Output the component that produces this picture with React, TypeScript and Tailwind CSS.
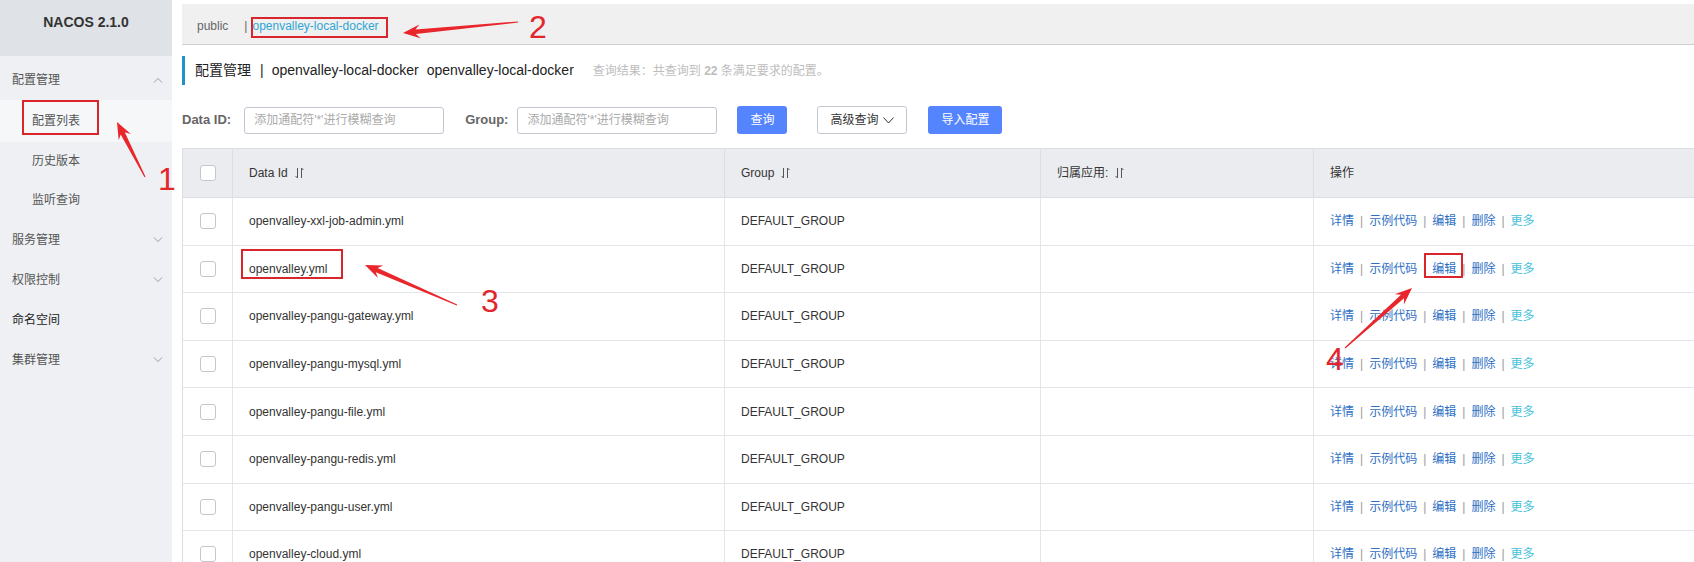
import React from "react";

const rows = [
  "openvalley-xxl-job-admin.yml",
  "openvalley.yml",
  "openvalley-pangu-gateway.yml",
  "openvalley-pangu-mysql.yml",
  "openvalley-pangu-file.yml",
  "openvalley-pangu-redis.yml",
  "openvalley-pangu-user.yml",
  "openvalley-cloud.yml",
];

const Chevron = ({ up }: { up?: boolean }) => (
  <svg width="10" height="6" viewBox="0 0 10 6" className="text-[#9a9da3]">
    <polyline
      points={up ? "1,5.5 5,1.5 9,5.5" : "1,0.5 5,4.5 9,0.5"}
      fill="none"
      stroke="currentColor"
      strokeWidth="1"
    />
  </svg>
);

const SortIcon = () => (
  <svg width="9" height="12" viewBox="0 0 9 12" className="ml-[7px] text-[#555]">
    <path d="M2.5 1 V11 L0.5 9" fill="none" stroke="currentColor" strokeWidth="1" />
    <path d="M6.5 11 V1 L8.5 3" fill="none" stroke="currentColor" strokeWidth="1" />
  </svg>
);

const Checkbox = () => (
  <span className="block w-[16px] h-[16px] rounded-[3px] border border-[#c4c6cf] bg-white" />
);

// red screenshot-tool arrow, tail -> tip
function arrow(tx: number, ty: number, px: number, py: number) {
  const dx = px - tx;
  const dy = py - ty;
  const len = Math.sqrt(dx * dx + dy * dy);
  const ux = dx / len;
  const uy = dy / len;
  const nx = -uy;
  const ny = ux;
  const head = 17;
  const pt = (d: number, w: number) =>
    `${(px - ux * d + nx * w).toFixed(1)},${(py - uy * d + ny * w).toFixed(1)}`;
  return [
    `${(tx + nx * 0.6).toFixed(1)},${(ty + ny * 0.6).toFixed(1)}`,
    pt(head * 0.75, 2.3),
    pt(head, 6.8),
    `${px},${py}`,
    pt(head, -6.8),
    pt(head * 0.75, -2.3),
    `${(tx - nx * 0.6).toFixed(1)},${(ty - ny * 0.6).toFixed(1)}`,
  ].join(" ");
}

const Sep = () => <span className="mx-[6px] text-[#9a9a9a]">|</span>;

const Actions = () => (
  <div className="flex items-center text-[12px] text-[#2e6fc4]">
    <span>详情</span>
    <Sep />
    <span>示例代码</span>
    <Sep />
    <span>编辑</span>
    <Sep />
    <span>删除</span>
    <Sep />
    <span className="text-[#45c1dc]">更多</span>
  </div>
);

const cols = "grid grid-cols-[50px_492px_316px_273px_1fr]";

export default function App() {
  return (
    <div className="relative w-[1694px] h-[562px] overflow-hidden flex bg-white text-[#333] font-['Liberation_Sans','Noto_Sans_CJK_SC',sans-serif]">
      {/* sidebar */}
      <aside className="w-[172px] shrink-0 bg-[#eef0f3]">
        <div className="h-[56px] bg-[#dfe2e6] flex justify-center pt-[13px] text-[14px] font-bold leading-[18px] text-[#333]">
          NACOS 2.1.0
        </div>
        <nav className="pt-[4px] text-[12px] text-[#555]">
          <div className="h-[40px] flex items-center justify-between pl-[12px] pr-[9px]">
            <span>配置管理</span>
            <Chevron up />
          </div>
          <div className="h-[42px] flex items-center pl-[32px] bg-[#f6f7f9]">配置列表</div>
          <div className="h-[38px] flex items-center pl-[32px]">历史版本</div>
          <div className="h-[40px] flex items-center pl-[32px]">监听查询</div>
          <div className="h-[40px] flex items-center justify-between pl-[12px] pr-[9px]">
            <span>服务管理</span>
            <Chevron />
          </div>
          <div className="h-[40px] flex items-center justify-between pl-[12px] pr-[9px]">
            <span>权限控制</span>
            <Chevron />
          </div>
          <div className="h-[40px] flex items-center pl-[12px] text-[#222]">命名空间</div>
          <div className="h-[40px] flex items-center justify-between pl-[12px] pr-[9px]">
            <span>集群管理</span>
            <Chevron />
          </div>
        </nav>
      </aside>

      {/* main */}
      <main className="flex-1 pl-[10px] pt-[4px] min-w-0">
        <div className="h-[41px] bg-[#f0f0f0] border-b border-[#cfcfcf] flex items-center pl-[15px] pt-[4px] text-[12px]">
          <span className="text-[#666]">public</span>
          <span className="ml-[16px] text-[#666]">|</span>
          <span className="ml-[5px] text-[#2ea7d6]">openvalley-local-docker</span>
        </div>

        <div className="mt-[11px] h-[29px] border-l-[3px] border-[#1f93c8] pl-[10px] flex items-center text-[14px] text-[#222]">
          <span>配置管理</span>
          <span className="ml-[9px]">|</span>
          <span className="ml-[8px]">openvalley-local-docker</span>
          <span className="ml-[8px]">openvalley-local-docker</span>
          <span className="ml-[19px] text-[12px] text-[#bdbdbd]">
            查询结果：共查询到 <b className="font-bold">22</b> 条满足要求的配置。
          </span>
        </div>

        <div className="mt-[21px] h-[28px] flex items-center text-[12px]">
          <span className="text-[13px] font-bold text-[#666]">Data ID:</span>
          <div className="ml-[13px] w-[200px] h-[27px] border border-[#c4c6cf] rounded-[3px] flex items-center pl-[9px] text-[#aaa]">
            添加通配符'*'进行模糊查询
          </div>
          <span className="ml-[21px] text-[13px] font-bold text-[#666]">Group:</span>
          <div className="ml-[9px] w-[200px] h-[27px] border border-[#c4c6cf] rounded-[3px] flex items-center pl-[9px] text-[#aaa]">
            添加通配符'*'进行模糊查询
          </div>
          <button className="ml-[20px] w-[50px] h-[28px] rounded-[3px] bg-[#5584ff] text-white">查询</button>
          <button className="ml-[30px] w-[90px] h-[28px] rounded-[3px] border border-[#c4c6cf] bg-white text-[#333] flex items-center justify-center gap-[5px]">
            高级查询
            <svg width="11" height="7" viewBox="0 0 11 7">
              <polyline points="0.5,0.5 5.5,6 10.5,0.5" fill="none" stroke="#333" strokeWidth="1" />
            </svg>
          </button>
          <button className="ml-[21px] w-[74px] h-[28px] rounded-[3px] bg-[#5584ff] text-white">导入配置</button>
        </div>

        <div className="mt-[14px] border-t border-l border-[#dcdee3] text-[12px]">
          <div className={`${cols} h-[49px] bg-[#ebecf0] border-b border-[#dcdee3]`}>
            <div className="flex items-center justify-center border-r border-[#dcdee3]">
              <Checkbox />
            </div>
            <div className="flex items-center pl-[16px] border-r border-[#dcdee3]">
              Data Id
              <SortIcon />
            </div>
            <div className="flex items-center pl-[16px] border-r border-[#dcdee3]">
              Group
              <SortIcon />
            </div>
            <div className="flex items-center pl-[16px] border-r border-[#dcdee3]">
              归属应用:
              <SortIcon />
            </div>
            <div className="flex items-center pl-[16px]">操作</div>
          </div>
          {rows.map((r) => (
            <div key={r} className={`${cols} h-[47.6px] border-b border-[#e4e5e9]`}>
              <div className="flex items-center justify-center border-r border-[#e4e5e9]">
                <Checkbox />
              </div>
              <div className="flex items-center pl-[16px] border-r border-[#e4e5e9]">{r}</div>
              <div className="flex items-center pl-[16px] border-r border-[#e4e5e9]">DEFAULT_GROUP</div>
              <div className="border-r border-[#e4e5e9]" />
              <div className="flex items-center pl-[16px]">
                <Actions />
              </div>
            </div>
          ))}
        </div>
      </main>

      {/* annotations */}
      <div className="absolute left-[22px] top-[100px] w-[77px] h-[35px] border-2 border-[#d9262c]" />
      <div className="absolute left-[251px] top-[17px] w-[137px] h-[21px] border-2 border-[#d9262c]" />
      <div className="absolute left-[241px] top-[249px] w-[102px] h-[30px] border-2 border-[#d9262c]" />
      <div className="absolute left-[1424px] top-[253px] w-[39px] h-[25px] border-2 border-[#d9262c]" />

      <svg className="absolute left-0 top-0 pointer-events-none" width="1694" height="562">
        <polygon points={arrow(145, 177, 117, 122)} fill="#e8262b" />
        <polygon points={arrow(518, 22, 403, 33)} fill="#e8262b" />
        <polygon points={arrow(457, 305, 365, 265)} fill="#e8262b" />
        <polygon points={arrow(1345, 348, 1412, 288)} fill="#e8262b" />
      </svg>

      <span className="absolute left-[158px] top-[163px] text-[32px] leading-none text-[#e3262b]">1</span>
      <span className="absolute left-[529px] top-[11px] text-[32px] leading-none text-[#e3262b]">2</span>
      <span className="absolute left-[481px] top-[285px] text-[32px] leading-none text-[#e3262b]">3</span>
      <span className="absolute left-[1326px] top-[343px] text-[32px] leading-none text-[#e3262b]">4</span>
    </div>
  );
}
